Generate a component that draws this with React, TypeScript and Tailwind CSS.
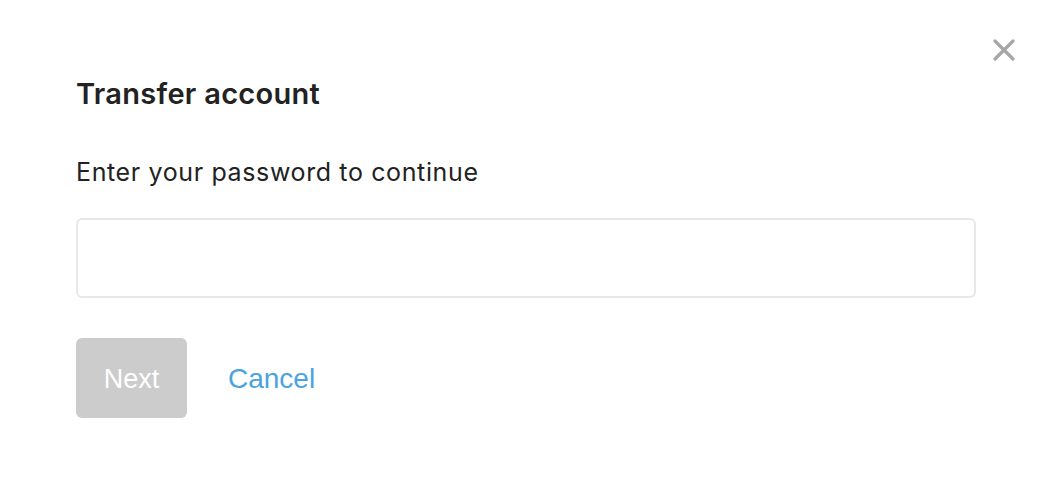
export default function App() {
  return (
    <div className="relative h-[497px] w-[1054px] bg-white" style={{ fontFamily: "Inter, 'Liberation Sans', sans-serif" }}>
      <button className="absolute right-[38px] top-[38px] text-[#a6a6a6]" aria-label="Close">
        <svg width="24" height="24" viewBox="0 0 24 24" fill="none" stroke="currentColor" strokeWidth="3.2" strokeLinecap="round">
          <path d="M3 3L21 21M21 3L3 21" />
        </svg>
      </button>

      <div className="flex flex-col px-[76px] pt-[76px]">
        <h1 className="text-[29px] font-semibold leading-[36px] tracking-[0.01em] text-[#222]">Transfer account</h1>
        <p className="mt-[44px] text-[25px] leading-[32px] tracking-[0.025em] text-[#222]">Enter your password to continue</p>
        <input
          type="password"
          className="mt-[30px] h-[80px] w-[900px] rounded-[6px] border-2 border-[#e8e8e8] px-4 outline-none"
        />
        <div className="mt-[40px] flex items-center gap-[41px]">
          <button
            className="h-[80px] w-[111px] rounded-[6px] bg-[#cccccc] pt-[2px] text-[27px] text-white"
            style={{ fontFamily: "'Liberation Sans', Arial, sans-serif" }}
          >
            Next
          </button>
          <button
            className="pt-[2px] text-[28px] text-[#4aa3df]"
            style={{ fontFamily: "'Liberation Sans', Arial, sans-serif" }}
          >
            Cancel
          </button>
        </div>
      </div>
    </div>
  );
}
